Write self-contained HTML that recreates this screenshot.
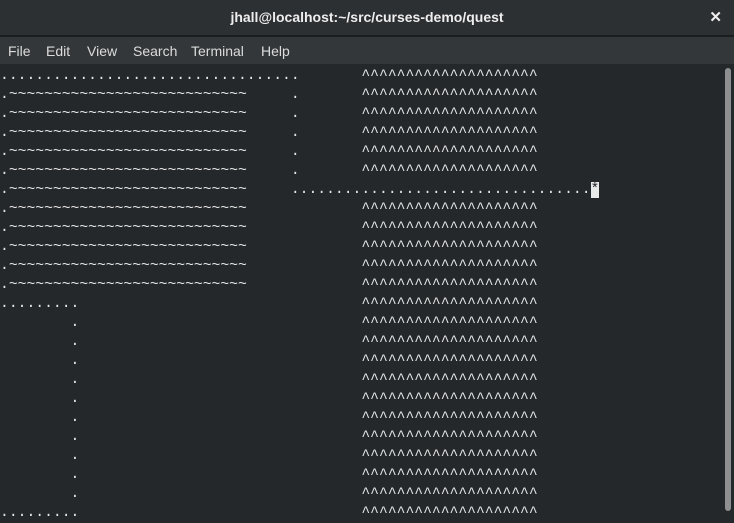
<!DOCTYPE html>
<html><head><style>
body{margin:0;width:734px;height:522px;overflow:hidden;background:#25282b;font-family:"Liberation Sans",sans-serif;position:relative}
#title{position:absolute;left:0;top:0;width:734px;height:35px;background:#2d3033;color:#eee;font-weight:bold;font-size:14px;text-align:center;line-height:35px}
#sep{position:absolute;left:0;top:35px;width:734px;height:2px;background:#1b1d1f}
#x{position:absolute;right:12px;top:0;line-height:35px;font-size:15px;color:#eee;font-weight:bold}
#menu{position:absolute;left:0;top:37px;width:734px;height:27px;background:#33373a;color:#dcdcdc;font-size:14px;line-height:28px}
#menu span{position:absolute}
#term{position:absolute;left:0;top:67px;margin:0;font-family:"Liberation Mono",monospace;font-size:14.7px;line-height:19px;color:#e6e6e6;white-space:pre}
#sb{position:absolute;left:725px;top:68px;width:6px;height:443px;background:#8d8f91;border-radius:3px}
.cur{background:#eaeaea;color:#25282b}
</style></head><body>
<div id="title">jhall@localhost:~/src/curses-demo/quest</div>
<div id="x">✕</div>
<div id="sep"></div>
<div id="menu"><span style="left:8px">File</span><span style="left:46px">Edit</span><span style="left:87px">View</span><span style="left:133px">Search</span><span style="left:191px">Terminal</span><span style="left:261px">Help</span></div>
<pre id="term">..................................       ^^^^^^^^^^^^^^^^^^^^
.~~~~~~~~~~~~~~~~~~~~~~~~~~~     .       ^^^^^^^^^^^^^^^^^^^^
.~~~~~~~~~~~~~~~~~~~~~~~~~~~     .       ^^^^^^^^^^^^^^^^^^^^
.~~~~~~~~~~~~~~~~~~~~~~~~~~~     .       ^^^^^^^^^^^^^^^^^^^^
.~~~~~~~~~~~~~~~~~~~~~~~~~~~     .       ^^^^^^^^^^^^^^^^^^^^
.~~~~~~~~~~~~~~~~~~~~~~~~~~~     .       ^^^^^^^^^^^^^^^^^^^^
.~~~~~~~~~~~~~~~~~~~~~~~~~~~     ..................................<span class="cur">*</span>
.~~~~~~~~~~~~~~~~~~~~~~~~~~~             ^^^^^^^^^^^^^^^^^^^^
.~~~~~~~~~~~~~~~~~~~~~~~~~~~             ^^^^^^^^^^^^^^^^^^^^
.~~~~~~~~~~~~~~~~~~~~~~~~~~~             ^^^^^^^^^^^^^^^^^^^^
.~~~~~~~~~~~~~~~~~~~~~~~~~~~             ^^^^^^^^^^^^^^^^^^^^
.~~~~~~~~~~~~~~~~~~~~~~~~~~~             ^^^^^^^^^^^^^^^^^^^^
.........                                ^^^^^^^^^^^^^^^^^^^^
        .                                ^^^^^^^^^^^^^^^^^^^^
        .                                ^^^^^^^^^^^^^^^^^^^^
        .                                ^^^^^^^^^^^^^^^^^^^^
        .                                ^^^^^^^^^^^^^^^^^^^^
        .                                ^^^^^^^^^^^^^^^^^^^^
        .                                ^^^^^^^^^^^^^^^^^^^^
        .                                ^^^^^^^^^^^^^^^^^^^^
        .                                ^^^^^^^^^^^^^^^^^^^^
        .                                ^^^^^^^^^^^^^^^^^^^^
        .                                ^^^^^^^^^^^^^^^^^^^^
.........                                ^^^^^^^^^^^^^^^^^^^^</pre>
<div id="sb"></div>
</body></html>
